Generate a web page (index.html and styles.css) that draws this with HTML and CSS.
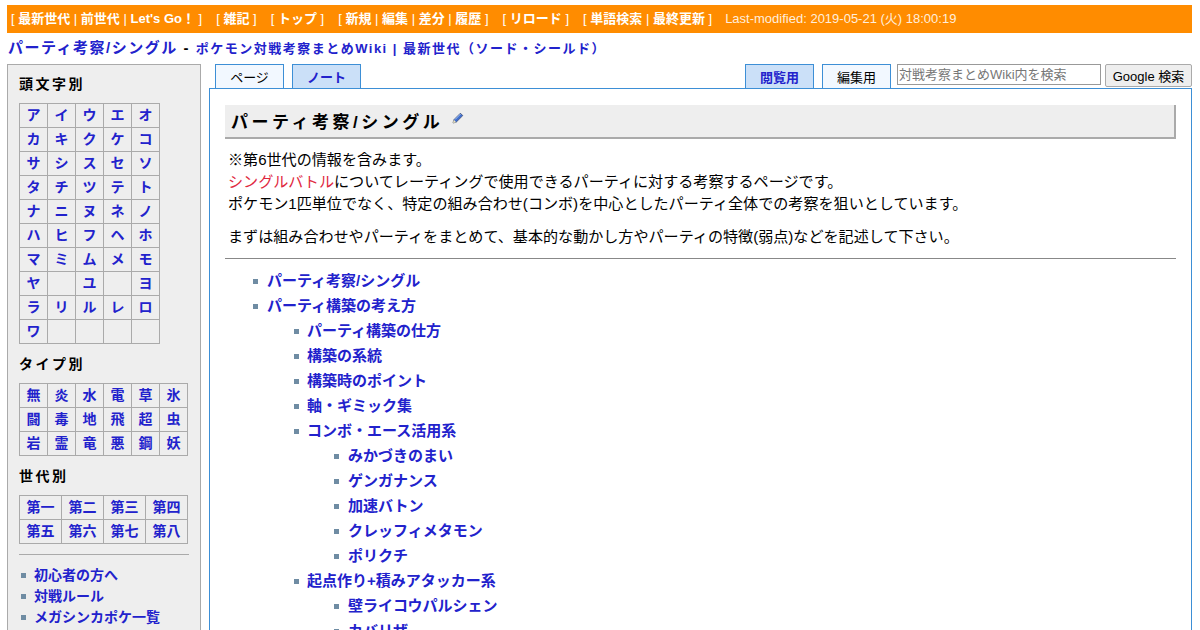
FILE: index.html
```html
<!DOCTYPE html>
<html lang="ja">
<head>
<meta charset="utf-8">
<title>パーティ考察/シングル</title>
<link rel="stylesheet" href="styles.css">
</head>
<body>
<div class="topbar">[ <a>最新世代</a> | <a>前世代</a> | <a>Let's Go！</a> ]<span class="s"></span>[ <a>雑記</a> ]<span class="s"></span>[ <a>トップ</a> ]<span class="s"></span>[ <a>新規</a> | <a>編集</a> | <a>差分</a> | <a>履歴</a> ]<span class="s"></span>[ <a>リロード</a> ]<span class="s"></span>[ <a>単語検索</a> | <a>最終更新</a> ]<span class="s2"></span><span class="mod">Last-modified: 2019-05-21 (火) 18:00:19</span></div>
<h1 class="title"><a>パーティ考察/シングル</a> <span class="dash">-</span> <a class="sub">ポケモン対戦考察まとめWiki | 最新世代（ソード・シールド）</a></h1>
<div class="layout">
  <aside class="side">
    <h4>頭文字別</h4>
    <div class="grid g5">
      <a>ア</a><a>イ</a><a>ウ</a><a>エ</a><a>オ</a>
      <a>カ</a><a>キ</a><a>ク</a><a>ケ</a><a>コ</a>
      <a>サ</a><a>シ</a><a>ス</a><a>セ</a><a>ソ</a>
      <a>タ</a><a>チ</a><a>ツ</a><a>テ</a><a>ト</a>
      <a>ナ</a><a>ニ</a><a>ヌ</a><a>ネ</a><a>ノ</a>
      <a>ハ</a><a>ヒ</a><a>フ</a><a>ヘ</a><a>ホ</a>
      <a>マ</a><a>ミ</a><a>ム</a><a>メ</a><a>モ</a>
      <a>ヤ</a><a></a><a>ユ</a><a></a><a>ヨ</a>
      <a>ラ</a><a>リ</a><a>ル</a><a>レ</a><a>ロ</a>
      <a>ワ</a><a></a><a></a><a></a><a></a>
    </div>
    <h4>タイプ別</h4>
    <div class="grid g6">
      <a>無</a><a>炎</a><a>水</a><a>電</a><a>草</a><a>氷</a>
      <a>闘</a><a>毒</a><a>地</a><a>飛</a><a>超</a><a>虫</a>
      <a>岩</a><a>霊</a><a>竜</a><a>悪</a><a>鋼</a><a>妖</a>
    </div>
    <h4>世代別</h4>
    <div class="grid g4">
      <a>第一</a><a>第二</a><a>第三</a><a>第四</a>
      <a>第五</a><a>第六</a><a>第七</a><a>第八</a>
    </div>
    <hr class="side-rule">
    <ul class="side-list">
      <li><a>初心者の方へ</a></li>
      <li><a>対戦ルール</a></li>
      <li><a>メガシンカポケ一覧</a></li>
    </ul>
  </aside>
  <main class="main">
    <div class="tabs">
      <div class="tab">ページ</div>
      <div class="tab on">ノート</div>
      <div class="spacer"></div>
      <div class="tab on wide">閲覧用</div>
      <div class="tab wide">編集用</div>
      <form class="search"><input class="q" type="text" placeholder="対戦考察まとめWiki内を検索"><button class="go" type="button">Google 検索</button></form>
    </div>
    <div class="panel">
      <h2 class="head">パーティ考察/シングル <svg class="pen" width="12" height="12" viewBox="0 0 12 12"><path d="M1 11l.8-3.200L8.400 1.200l2.400 2.400L4.200 10.200z" fill="#3f6fd0" stroke="#2a3350" stroke-width=".6"/><path d="M3 7.500L8.500 2" stroke="#b8d0f5" stroke-width=".9"/><path d="M1 11l.8-3.200L4.200 10.200z" fill="#f3e8bd"/></svg></h2>
      <p class="para">※第6世代の情報を含みます。<br><span class="red">シングルバトル</span>についてレーティングで使用できるパーティに対する考察するページです。<br>ポケモン1匹単位でなく、特定の組み合わせ(コンボ)を中心としたパーティ全体での考察を狙いとしています。</p>
      <p class="para second">まずは組み合わせやパーティをまとめて、基本的な動かし方やパーティの特徴(弱点)などを記述して下さい。</p>
      <hr class="rule">
      <ul class="toc">
        <li><a>パーティ考察/シングル</a></li>
        <li><a>パーティ構築の考え方</a>
          <ul>
            <li><a>パーティ構築の仕方</a></li>
            <li><a>構築の系統</a></li>
            <li><a>構築時のポイント</a></li>
            <li><a>軸・ギミック集</a></li>
            <li><a>コンボ・エース活用系</a>
              <ul>
                <li><a>みかづきのまい</a></li>
                <li><a>ゲンガナンス</a></li>
                <li><a>加速バトン</a></li>
                <li><a>クレッフィメタモン</a></li>
                <li><a>ポリクチ</a></li>
              </ul>
            </li>
            <li><a>起点作り+積みアタッカー系</a>
              <ul>
                <li><a>壁ライコウパルシェン</a></li>
                <li><a>カバリザ</a></li>
              </ul>
            </li>
          </ul>
        </li>
      </ul>
    </div>
  </main>
</div>
</body>
</html>
```
FILE: styles.css
```css
html, body { margin: 0; padding: 0; height: 630px; overflow: hidden; background: #fff; }
body { font-family: "Liberation Sans", "Noto Sans CJK JP", sans-serif; font-size: 14px; color: #000; padding: 5px 8px 0 7px; box-sizing: border-box; }
a { color: #2222cc; font-weight: bold; }
.topbar { background: #ff8c00; color: #fff; height: 28px; line-height: 28px; font-size: 13px; padding-left: 4px; white-space: nowrap; }
.topbar a { color: #fff; }
.mod { color: #ffeedd; }
.s { display: inline-block; width: 14px; }
.s2 { display: inline-block; width: 13px; }
.title { margin: 5px 0 0 1px; height: 26px; line-height: 19px; font-size: 15px; font-weight: bold; letter-spacing: 1.500px; white-space: nowrap; }
.title .sub { font-size: 13px; }
.layout { display: flex; gap: 8px; align-items: flex-start; }
.side { width: 194px; height: 580px; box-sizing: border-box; flex: none; background: #eeeeee; border: 1px solid #aaaaaa; padding: 9px 11px; }
.side h4 { margin: 0 0 9px; font-size: 14px; line-height: 20px; letter-spacing: 2.500px; font-weight: bold; }
.grid { display: grid; grid-auto-rows: 24px; border-top: 1px solid #aaa; border-left: 1px solid #aaa; margin-bottom: 10px; width: max-content; }
.grid a { display: block; box-sizing: border-box; border-right: 1px solid #aaa; border-bottom: 1px solid #aaa; text-align: center; line-height: 23px; font-size: 14px; }
.g5 { grid-template-columns: repeat(5, 28px); }
.g6 { grid-template-columns: repeat(6, 28px); }
.g4 { grid-template-columns: repeat(4, 42px); }
.side-rule { border: 0; border-top: 1px solid #aaa; margin: 0 0 10px; height: 0; }
.side-list { list-style: none; margin: 0; padding: 0; }
.side-list li { position: relative; padding-left: 15px; line-height: 21px; }
.side-list li::before { content: ""; position: absolute; left: 2px; top: 8px; width: 5px; height: 5px; background: #6f8ca3; }
.main { flex: 1; min-width: 0; }
.tabs { display: flex; align-items: flex-end; height: 24px; padding-left: 6px; gap: 8px; }
.tab { box-sizing: border-box; width: 69px; height: 24px; border: 1px solid #3d8fd6; border-bottom: 0; background: #f2f8ff; text-align: center; line-height: 26px; font-size: 13px; }
.tab.on { background: #cbe0f8; color: #2222cc; font-weight: bold; }
.spacer { flex: 1; }
.search { display: flex; gap: 4px; align-self: flex-start; margin-left: -2px; }
.q { box-sizing: border-box; width: 204px; height: 21px; border: 1px solid #999; padding: 0 1px; font: 13px "Liberation Sans", "Noto Sans CJK JP", sans-serif; }
.q::placeholder { color: #777; }
.go { box-sizing: border-box; width: 87px; height: 23px; padding: 0; border: 1px solid #aaa; border-radius: 2px; background: #eee; font: 13px "Liberation Sans", "Noto Sans CJK JP", sans-serif; color: #000; }
.panel { box-sizing: border-box; height: 560px; border: 1px solid #3d8fd6; padding: 16px 15px 0; }
.head { margin: 0 0 10px; height: 34px; box-sizing: border-box; background: #eeeeee; border-right: 2px solid #aaa; border-bottom: 2px solid #aaa; padding-left: 6px; font-size: 17px; line-height: 36px; letter-spacing: 3.500px; font-weight: bold; }
.pen { vertical-align: 4px; margin-left: 1px; }
.para { margin: 0; padding-left: 3px; line-height: 22px; font-size: 15.080px; }
.para.second { margin-top: 11px; }
.red { color: #e02840; }
.rule { border: 0; border-top: 1px solid #888; margin: 10px 0 9px; height: 0; }
.toc, .toc ul { list-style: none; margin: 0; padding: 0 0 0 40px; }
.toc { padding-left: 42px; }
.toc ul ul { padding-left: 41px; }
.toc li { position: relative; line-height: 25px; font-size: 15px; }
.toc li::before { content: ""; position: absolute; left: -14px; top: 11px; width: 5px; height: 5px; background: #6f8ca3; }
.toc > li > ul > li::before { left: -13px; }
```
